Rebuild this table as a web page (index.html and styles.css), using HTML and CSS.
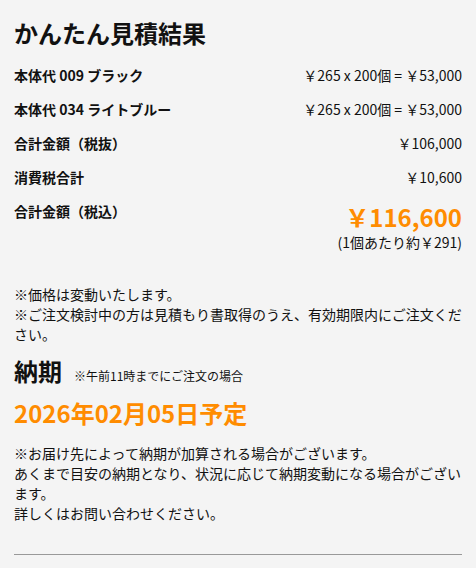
FILE: index.html
```html
<!DOCTYPE html>
<html lang="ja">
<head>
<meta charset="utf-8">
<link rel="stylesheet" href="styles.css">
</head>
<body>
<div class="page">
  <h1 class="title">かんたん見積結果</h1>
  <div class="rows">
    <div class="row"><span class="label">本体代 009 ブラック</span><span class="value">￥265 x 200個 = ￥53,000</span></div>
    <div class="row"><span class="label">本体代 034 ライトブルー</span><span class="value">￥265 x 200個 = ￥53,000</span></div>
    <div class="row"><span class="label">合計金額（税抜）</span><span class="value">￥106,000</span></div>
    <div class="row"><span class="label">消費税合計</span><span class="value">￥10,600</span></div>
    <div class="row total"><span class="label">合計金額（税込）</span>
      <div class="total-box"><span class="total-price">￥116,600</span><span class="unit">(1個あたり約￥291)</span></div>
    </div>
  </div>
  <p class="note notes1">※価格は変動いたします。<br>※ご注文検討中の方は見積もり書取得のうえ、有効期限内にご注文ください。</p>
  <div class="delivery-head"><h2 class="delivery-title">納期</h2><span class="delivery-sub">※午前11時までにご注文の場合</span></div>
  <div class="date">2026年02月05日予定</div>
  <p class="note notes2">※お届け先によって納期が加算される場合がございます。<br>あくまで目安の納期となり、状況に応じて納期変動になる場合がございます。<br>詳しくはお問い合わせください。</p>
  <hr class="rule">
</div>
</body>
</html>
```
FILE: styles.css
```css
html, body {
  margin: 0;
  padding: 0;
  background: #f4f4f4;
}
body {
  font-family: "Noto Sans CJK JP", "Noto Sans", sans-serif;
  color: #111;
}
.page {
  padding: 14px 14px 0 14px;
}
.title {
  margin: 0;
  font-size: 24px;
  font-weight: 700;
  line-height: 38px;
}
.rows {
  margin-top: 13px;
  display: flex;
  flex-direction: column;
}
.row {
  display: flex;
  justify-content: space-between;
  align-items: flex-start;
  font-size: 14px;
  line-height: 20px;
  height: 34px;
}
.label {
  font-weight: 700;
}
.value {
  font-weight: 400;
}
.row.total {
  height: auto;
}
.total-box {
  display: flex;
  flex-direction: column;
  align-items: flex-end;
}
.total-price {
  color: #ff8c00;
  font-size: 24px;
  font-weight: 700;
  line-height: 30px;
  margin-top: 1px;
}
.unit {
  font-size: 14px;
  line-height: 20px;
}
.note {
  margin: 0;
  font-size: 14px;
  line-height: 20px;
}
.notes1 {
  margin-top: 32px;
}
.delivery-head {
  display: flex;
  align-items: baseline;
  gap: 12px;
  margin-top: 11px;
}
.delivery-title {
  margin: 0;
  font-size: 24px;
  font-weight: 700;
  line-height: 32px;
}
.delivery-sub {
  font-size: 12px;
}
.date {
  color: #ff8c00;
  font-size: 24px;
  font-weight: 700;
  line-height: 32px;
  margin-top: 10px;
}
.notes2 {
  margin-top: 14px;
}
.rule {
  margin: 31px 0 0 0;
  border: 0;
  border-top: 1px solid #999;
}
```
